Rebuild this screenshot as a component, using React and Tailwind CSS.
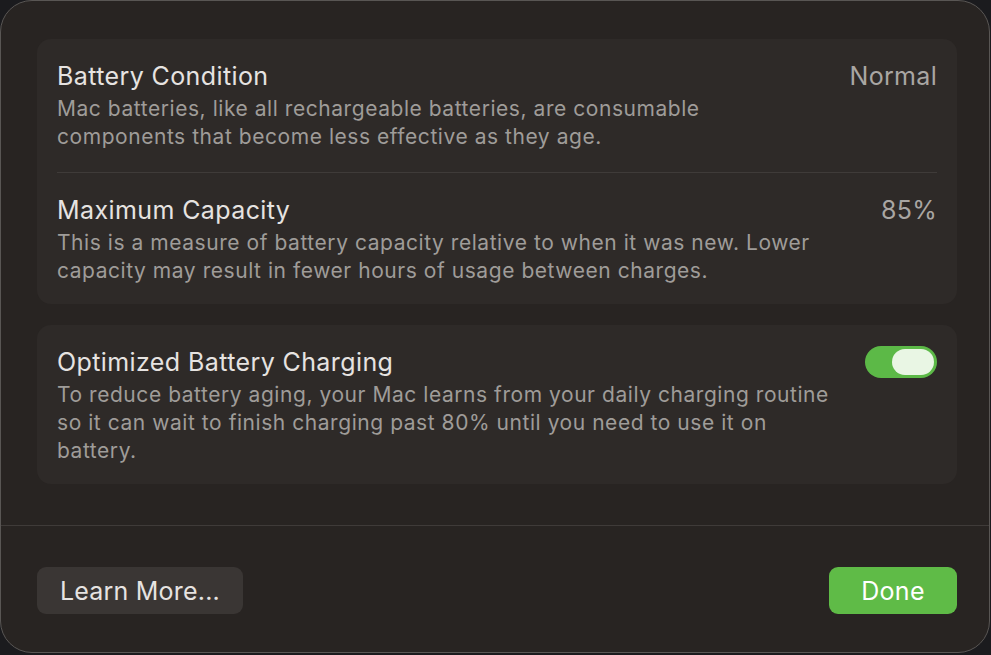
export default function App() {
  const title = "text-[25px] leading-[30px] tracking-[0.4px] text-[#e6e3e1]";
  const desc = "mt-[4px] text-[21px] leading-[28px] tracking-[0.55px] text-[#9f9c99]";
  const value = "text-[25px] leading-[30px] tracking-[0.3px] text-[#a9a6a3]";

  return (
    <div
      className="w-[991px] h-[655px] bg-[#1b1b1e] overflow-hidden"
      style={{ fontFamily: "Inter, 'Noto Sans', sans-serif" }}
    >
      <div className="w-[990px] h-[653px] rounded-[32px] border border-[#595654] bg-[#282422] flex flex-col">
        <div className="pl-[36px] pr-[32px] pt-[38px] flex flex-col gap-[21px]">
          <div className="rounded-[14px] bg-[#2e2a28] px-[20px]">
            <div className="flex justify-between pt-[22px] pb-[21px] border-b border-[#3f3b39]">
              <div>
                <div className={title}>Battery Condition</div>
                <div className={desc}>
                  Mac batteries, like all rechargeable batteries, are consumable
                  <br />
                  components that become less effective as they age.
                </div>
              </div>
              <div className={value}>Normal</div>
            </div>
            <div className="flex justify-between pt-[22px] pb-[19px]">
              <div>
                <div className={title}>Maximum Capacity</div>
                <div className={desc}>
                  This is a measure of battery capacity relative to when it was new. Lower
                  <br />
                  capacity may result in fewer hours of usage between charges.
                </div>
              </div>
              <div className={value}>85%</div>
            </div>
          </div>

          <div className="rounded-[14px] bg-[#2e2a28] px-[20px] pt-[22px] pb-[19px] flex justify-between">
            <div>
              <div className={title}>Optimized Battery Charging</div>
              <div className={desc}>
                To reduce battery aging, your Mac learns from your daily charging routine
                <br />
                so it can wait to finish charging past 80% until you need to use it on
                <br />
                battery.
              </div>
            </div>
            <div className="mt-[-1px] w-[72px] h-[32px] rounded-full bg-[#5cb947] flex items-center justify-end pr-[3px] shrink-0">
              <div className="w-[42px] h-[26px] rounded-full bg-[#e9f6e4]" />
            </div>
          </div>
        </div>

        <div className="mt-[41px] border-t border-[#3f3b39]" />

        <div className="pl-[36px] pr-[32px] pt-[41px] flex justify-between">
          <button className="h-[47px] w-[206px] pt-[2px] rounded-[9px] bg-[#3a3634] text-[25px] tracking-[0.2px] text-[#e6e3e1]">
            Learn More...
          </button>
          <button className="h-[47px] w-[128px] pt-[2px] rounded-[9px] bg-[#5fbb47] text-[25px] tracking-[0.3px] text-white">
            Done
          </button>
        </div>
      </div>
    </div>
  );
}
